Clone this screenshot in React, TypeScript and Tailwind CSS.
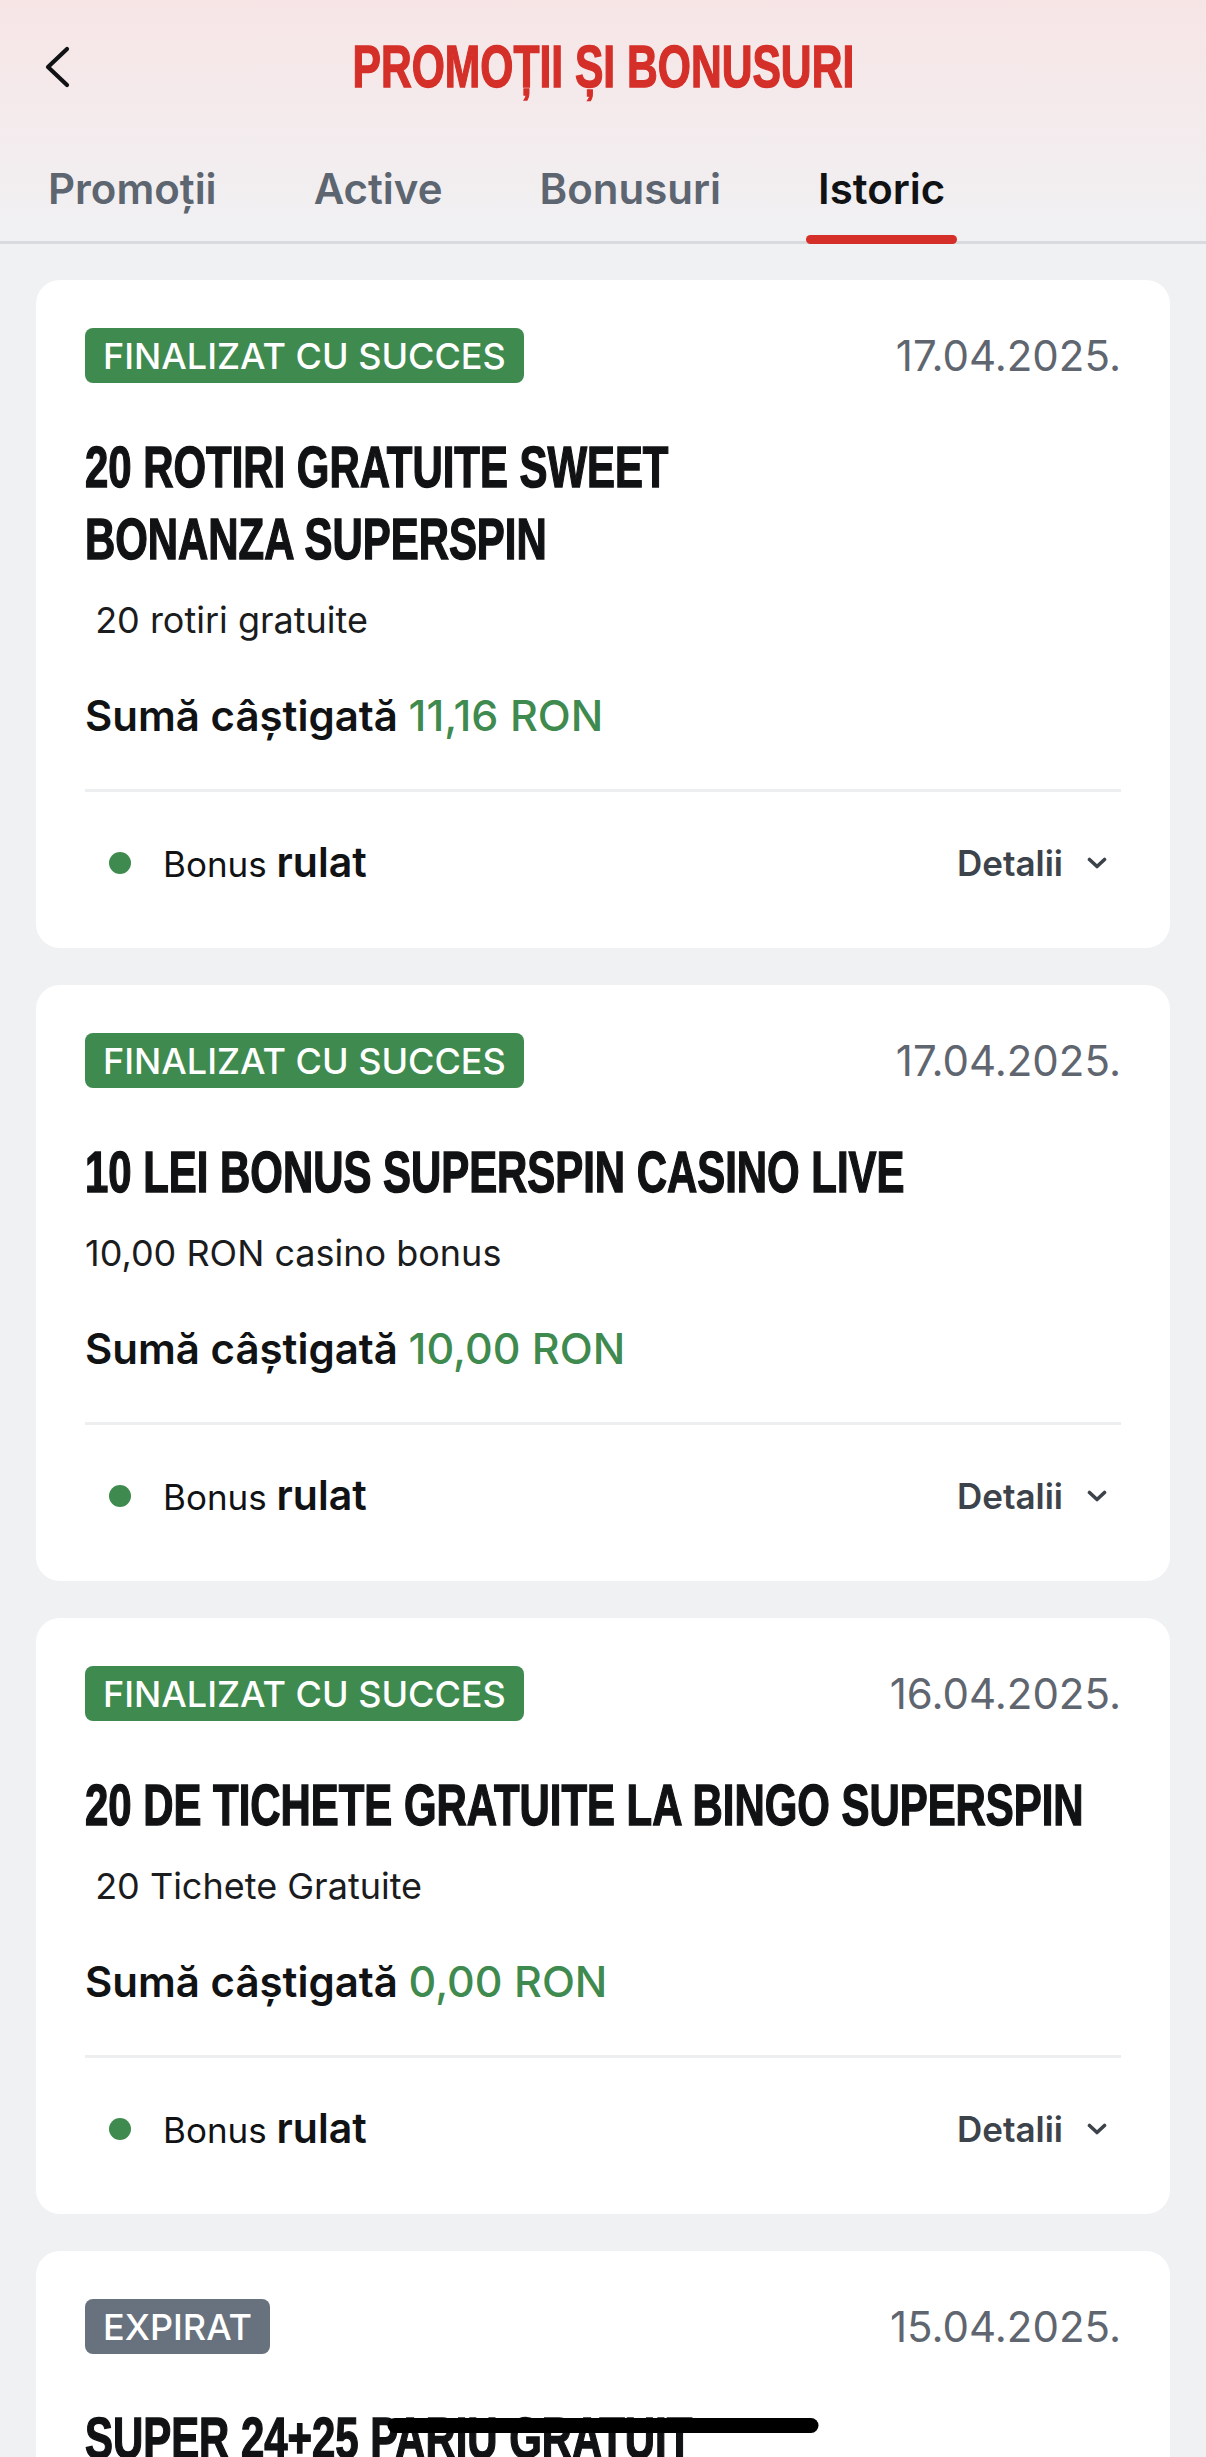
import React from "react";

const narrow = { fontFamily: '"Liberation Sans", Arial, sans-serif' };

type Promo = {
  status: "success" | "expired";
  date: string;
  title: React.ReactNode;
  subtitle: string;
  amount: string;
};

const promos: Promo[] = [
  {
    status: "success",
    date: "17.04.2025.",
    title: (
      <>
        20 ROTIRI GRATUITE SWEET
        <br />
        BONANZA SUPERSPIN
      </>
    ),
    subtitle: " 20 rotiri gratuite",
    amount: "11,16 RON",
  },
  {
    status: "success",
    date: "17.04.2025.",
    title: "10 LEI BONUS SUPERSPIN CASINO LIVE",
    subtitle: "10,00 RON casino bonus",
    amount: "10,00 RON",
  },
  {
    status: "success",
    date: "16.04.2025.",
    title: "20 DE TICHETE GRATUITE LA BINGO SUPERSPIN",
    subtitle: " 20 Tichete Gratuite",
    amount: "0,00 RON",
  },
  {
    status: "expired",
    date: "15.04.2025.",
    title: "SUPER 24+25 PARIU GRATUIT",
    subtitle: "1 pariu gratuit",
    amount: "0,00 RON",
  },
];

const tabs = ["Promoții", "Active", "Bonusuri", "Istoric"];

function PromoCard({ p }: { p: Promo }) {
  return (
    <div className="bg-white rounded-[24px] pt-[48px] px-[49px] pb-[60px] overflow-hidden">
      <div className="flex items-center justify-between">
        <span
          className={
            "h-[55px] px-[18px] rounded-[8px] flex items-center text-white text-[36px] font-medium leading-none " +
            (p.status === "success" ? "bg-[#3f8a4f]" : "bg-[#67727e]")
          }
        >
          {p.status === "success" ? "FINALIZAT CU SUCCES" : "EXPIRAT"}
        </span>
        <span className="text-[42px] text-[#5f6670] leading-none">{p.date}</span>
      </div>
      {/* condensed headline: Arial-metric bold squeezed horizontally */}
      <h2
        style={narrow}
        className="mt-[48px] w-[136%] origin-left scale-x-[0.735] text-[57px] leading-[72px] font-bold text-[#111214] [-webkit-text-stroke:1.4px_#111214]"
      >
        {p.title}
      </h2>
      <p className="mt-[25px] text-[36px] leading-[40px] text-[#1b1c1e] whitespace-pre">{p.subtitle}</p>
      <p className="mt-[51px] h-[48px] text-[42px] leading-[48px] font-semibold text-[#111214]">
        Sumă câștigată <span className="text-[43px] font-medium text-[#3f8a4f]">{p.amount}</span>
      </p>
      <div className="mt-[50px] h-[3px] bg-[#eceef0]" />
      <div className="mt-[46px] h-[50px] flex items-center justify-between pl-[24px] pr-[14px]">
        <div className="flex items-center gap-[32px]">
          <span className="w-[22px] h-[22px] rounded-full bg-[#3f8a4f]" />
          <span className="text-[35px] text-[#111214]">
            Bonus <span className="text-[41px] font-semibold">rulat</span>
          </span>
        </div>
        <button className="flex items-center gap-[24px] text-[35px] font-semibold text-[#3d434b]">
          Detalii
          <svg width="20" height="12" viewBox="0 0 20 12" fill="none">
            <path d="M2.5 2.5 L10 9.5 L17.5 2.5" stroke="#3d434b" strokeWidth="3.6" strokeLinecap="round" strokeLinejoin="round" />
          </svg>
        </button>
      </div>
    </div>
  );
}

export default function App() {
  return (
    <div
      className="relative h-[2457px] overflow-hidden bg-[#f0f1f3]"
      style={{ fontFamily: 'Inter, "Noto Sans", "Liberation Sans", sans-serif' }}
    >
      <header className="bg-gradient-to-b from-[#f7e5e6] to-[#f0f1f3]">
        <div className="h-[134px] grid grid-cols-[1fr_auto_1fr] items-center">
          <button className="pl-[42px] flex items-center">
            <svg width="30" height="42" viewBox="0 0 30 42" fill="none">
              <path d="M25 3 L6 21 L25 39" stroke="#111214" strokeWidth="4.2" strokeLinecap="round" strokeLinejoin="round" />
            </svg>
          </button>
          <h1
            style={narrow}
            className="inline-block scale-x-[0.71] text-[60px] font-bold leading-none text-[#d42f28] [-webkit-text-stroke:1.4px_#d42f28]"
          >
            PROMOȚII ȘI BONUSURI
          </h1>
          <div />
        </div>
        <nav className="flex pl-[36px] gap-[73px] pt-[30px] border-b-[3px] border-[#d8dadd]">
          {tabs.map((t) => {
            const active = t === "Istoric";
            return (
              <div key={t} className="-mb-[3px] flex flex-col">
                <span
                  className={
                    "px-[12px] h-[50px] leading-[50px] text-[42px] font-semibold " +
                    (active ? "text-[#111214]" : "text-[#5c6570]")
                  }
                >
                  {t}
                </span>
                <span className={"mt-[21px] h-[9px] rounded-full " + (active ? "bg-[#d42f28]" : "bg-transparent")} />
              </div>
            );
          })}
        </nav>
      </header>

      <main className="px-[36px] pt-[36px] flex flex-col gap-[37px]">
        {promos.map((p, i) => (
          <PromoCard key={i} p={p} />
        ))}
      </main>

      <div className="fixed bottom-[24px] left-1/2 -translate-x-1/2 w-[431px] h-[15px] rounded-full bg-black" />
    </div>
  );
}
